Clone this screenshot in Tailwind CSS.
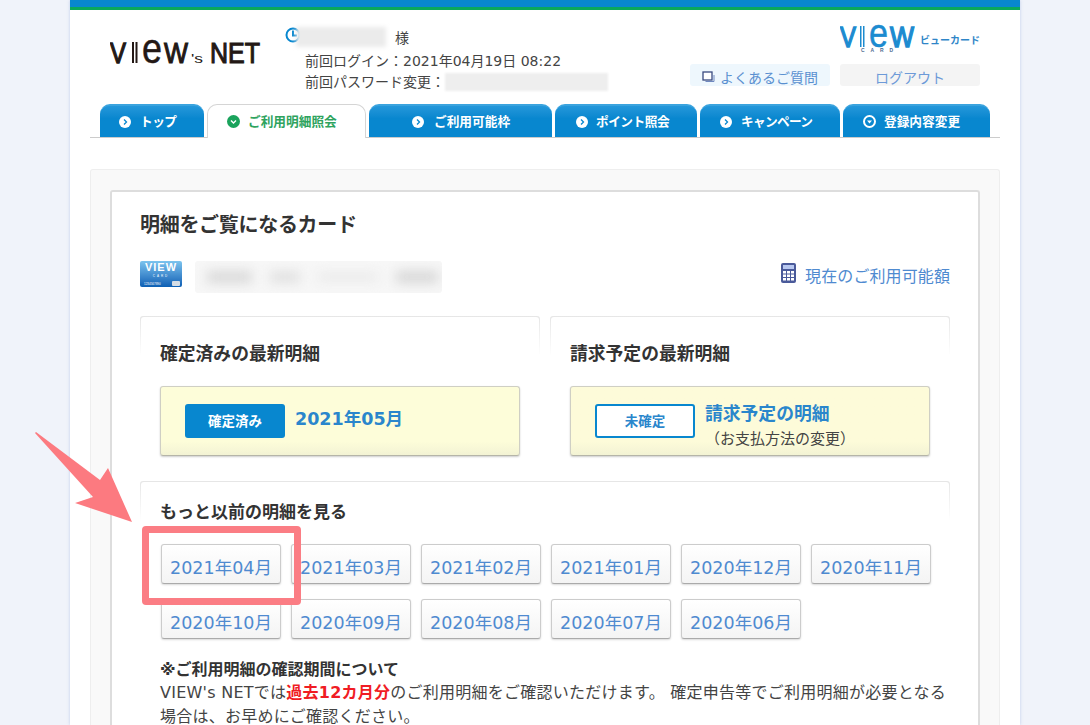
<!DOCTYPE html>
<html lang="ja">
<head>
<meta charset="utf-8">
<script src="https://cdn.jsdelivr.net/npm/@tailwindcss/browser@4"></script>
</head>
<body class="bg-[#f0f3fa]">
<div class="relative h-[725px] overflow-hidden font-['DejaVu_Sans','Noto_Sans_CJK_JP',sans-serif] text-[#333]">
  <div class="w-[950px] h-[725px] ml-[70px] bg-white shadow-[0_0_3px_rgba(170,190,230,0.7)]">
    <div class="h-[7px] bg-[#0887cf]"></div>
    <div class="h-[3px] bg-[#0aa85c]"></div>

    <!-- header -->
    <div class="h-[94px] flex">
      <div class="w-[215px] pl-[40px] pt-[15px]">
        <svg width="170" height="50" viewBox="0 0 170 50" class="block" font-family="Liberation Sans" fill="#231815">
          <text x="0" y="38" font-size="29" textLength="16" lengthAdjust="spacingAndGlyphs" stroke="#231815" stroke-width="1.300">V</text>
          <rect x="22" y="17" width="2" height="21" />
          <rect x="25.500" y="17" width="2" height="21" />
          <text x="32" y="38" font-size="42" textLength="20" lengthAdjust="spacingAndGlyphs" stroke="#231815" stroke-width="0.500">e</text>
          <text x="54" y="38" font-size="29" textLength="24" lengthAdjust="spacingAndGlyphs" stroke="#231815" stroke-width="1.100">W</text>
          <text x="81" y="38" font-size="13" textLength="12" lengthAdjust="spacingAndGlyphs">'s</text>
          <text x="100" y="38" font-size="29" textLength="50" lengthAdjust="spacingAndGlyphs" stroke="#231815" stroke-width="1.100">NET</text>
        </svg>
      </div>
      <div class="w-[405px] text-[14px] leading-[21px] text-[#444]">
        <div class="flex h-[40px] pt-[17px]">
          <svg width="16" height="16" viewBox="0 0 16 16" class="shrink-0"><circle cx="8" cy="8" r="6.500" fill="#fff" stroke="#0887cf" stroke-width="2"/><path d="M8 3.500V8.500H12" fill="none" stroke="#0887cf" stroke-width="2"/></svg>
          <div class="w-[90px] h-[20px] -ml-[5px] bg-[#ebebeb] blur-[2px]"></div>
          <span class="ml-[9px] leading-[22px]">様</span>
        </div>
        <div class="pl-[20px] pt-[1px]">前回ログイン：2021年04月19日 08:22</div>
        <div class="pl-[20px] flex">前回パスワード変更：<div class="w-[163px] h-[18px] mt-[1px] bg-[#eeeeee] blur-[1px]"></div></div>
      </div>
      <div class="w-[290px]">
        <div class="h-[54px] flex justify-end pt-[5px] gap-[5px]">
          <svg width="75" height="44" viewBox="0 0 75 44" font-family="Liberation Sans" fill="#1c8bd0">
            <text x="0" y="32" font-size="30" textLength="16" lengthAdjust="spacingAndGlyphs" stroke="#1c8bd0" stroke-width="1.500">V</text>
            <rect x="20" y="11" width="1.500" height="21"/><rect x="23" y="11" width="1.500" height="21"/>
            <text x="29" y="32" font-size="40" textLength="19" lengthAdjust="spacingAndGlyphs" stroke="#1c8bd0" stroke-width="0.500">e</text>
            <text x="50" y="32" font-size="30" textLength="24" lengthAdjust="spacingAndGlyphs" stroke="#1c8bd0" stroke-width="1.500">W</text>
            <text x="21" y="37" font-size="5" font-weight="700" textLength="32" fill="#4a6a90">CARD</text>
          </svg>
          <span class="w-[60px] text-[10px] font-bold leading-[52px] text-[#2f86c8] whitespace-nowrap">ビューカード</span>
        </div>
        <div class="flex gap-[10px]">
          <div class="w-[140px] h-[22px] bg-[#eef7fd] rounded-[3px] flex justify-center gap-[5px] text-[14px] leading-[29px] text-[#5a90d0] overflow-hidden">
            <svg width="13" height="13" viewBox="0 0 13 13" class="mt-[7px]"><path d="M3.500 10.500H12V4" fill="none" stroke="#6f88c0" stroke-width="1"/><rect x="1" y="1" width="9" height="8" fill="#fff" stroke="#3a4a80" stroke-width="1.300"/></svg>
            <span>よくあるご質問</span>
          </div>
          <div class="w-[140px] h-[22px] bg-[#f4f4f4] rounded-[3px] text-center text-[14px] leading-[29px] text-[#6d9ad8] overflow-hidden">ログアウト</div>
        </div>
      </div>
    </div>

    <!-- tabs -->
    <div class="mx-[20px] pl-[10px] h-[34px] flex gap-[3px] border-b border-[#cccccc] text-[12.7px] font-bold leading-[33px] text-white">
      <div class="w-[104px] h-[33px] pl-[19px] rounded-t-[10px] border-t-2 border-[#3aa3de] bg-linear-to-b from-[#2397da] to-[#0887cf] to-40% flex items-center gap-[9px]">
        <svg width="12" height="12" viewBox="0 0 12 12"><circle cx="6" cy="6" r="6" fill="#fff"/><path d="M5 3.500L7.500 6L5 8.500" fill="none" stroke="#0887cf" stroke-width="1.300"/></svg><span class="tracking-[-0.5px]">トップ</span>
      </div>
      <div class="w-[159px] h-[34px] pl-[19px] rounded-t-[10px] border border-b-0 border-[#d5d5d5] bg-white text-[#2ea35e] flex items-center gap-[8px]">
        <svg width="13" height="13" viewBox="0 0 13 13"><circle cx="6.500" cy="6.500" r="6.500" fill="#1aa35c"/><path d="M4 5.500L6.500 8L9 5.500" fill="none" stroke="#fff" stroke-width="1.400"/></svg><span>ご利用明細照会</span>
      </div>
      <div class="w-[183px] h-[33px] pl-[43px] rounded-t-[10px] border-t-2 border-[#3aa3de] bg-linear-to-b from-[#2397da] to-[#0887cf] to-40% flex items-center gap-[10px]">
        <svg width="12" height="12" viewBox="0 0 12 12"><circle cx="6" cy="6" r="6" fill="#fff"/><path d="M5 3.500L7.500 6L5 8.500" fill="none" stroke="#0887cf" stroke-width="1.300"/></svg><span>ご利用可能枠</span>
      </div>
      <div class="w-[142px] h-[33px] pl-[21px] rounded-t-[10px] border-t-2 border-[#3aa3de] bg-linear-to-b from-[#2397da] to-[#0887cf] to-40% flex items-center gap-[8px]">
        <svg width="12" height="12" viewBox="0 0 12 12"><circle cx="6" cy="6" r="6" fill="#fff"/><path d="M5 3.500L7.500 6L5 8.500" fill="none" stroke="#0887cf" stroke-width="1.300"/></svg><span class="tracking-[-0.5px]">ポイント照会</span>
      </div>
      <div class="w-[140px] h-[33px] pl-[20px] rounded-t-[10px] border-t-2 border-[#3aa3de] bg-linear-to-b from-[#2397da] to-[#0887cf] to-40% flex items-center gap-[9px]">
        <svg width="12" height="12" viewBox="0 0 12 12"><circle cx="6" cy="6" r="6" fill="#fff"/><path d="M5 3.500L7.500 6L5 8.500" fill="none" stroke="#0887cf" stroke-width="1.300"/></svg><span class="tracking-[-0.7px]">キャンペーン</span>
      </div>
      <div class="w-[147px] h-[33px] pl-[20px] rounded-t-[10px] border-t-2 border-[#3aa3de] bg-linear-to-b from-[#2397da] to-[#0887cf] to-40% flex items-center gap-[8px]">
        <svg width="13" height="13" viewBox="0 0 13 13"><circle cx="6.500" cy="6.500" r="5.500" fill="#0887cf" stroke="#fff" stroke-width="2"/><path d="M4 5.500H9L6.500 8.500Z" fill="#fff"/></svg><span>登録内容変更</span>
      </div>
    </div>

    <!-- outer panel -->
    <div class="mx-[20px] mt-[31px] px-[19px] pt-[20px] bg-[#f9f9f9] border border-b-0 border-[#eeeeee] rounded-t-[3px] h-[600px]">
      <div class="h-[600px] bg-white border-2 border-b-0 border-[#dddddd] rounded-t-[3px] px-[28px] pt-[18px]">
        <h2 class="text-[20px] font-bold leading-[30px] tracking-[-0.3px]">明細をご覧になるカード</h2>

        <div class="mt-[21px] h-[32px] flex">
          <div class="relative w-[42px] h-[26px] rounded-[2px] bg-linear-to-b from-[#7cc4ee] to-[#0a5fb4] text-white text-center overflow-hidden font-['Liberation_Sans']">
            <div class="text-[11px] font-bold leading-[13px] tracking-[1px]">VIEW</div>
            <div class="text-[3px] leading-[4px] tracking-[2px]">CARD</div>
            <div class="absolute bottom-[1px] left-[4px] text-[3px] leading-[4px]">1234567890</div>
            <div class="absolute bottom-[1px] right-[2px] w-[8px] h-[5px] bg-[#d5dde5] rounded-[1px]"></div>
          </div>
          <div class="ml-[13px] w-[247px] h-[32px] bg-[#f7f7f7] rounded-[3px] flex items-center pl-[12px] gap-[18px] overflow-hidden">
            <div class="w-[45px] h-[12px] bg-[#d8d8d8] blur-[6px]"></div>
            <div class="w-[30px] h-[10px] bg-[#dddddd] blur-[6px]"></div>
            <div class="w-[60px] h-[8px] bg-[#e8e8e8] blur-[6px]"></div>
            <div class="w-[42px] h-[12px] bg-[#d6d6d6] blur-[6px]"></div>
          </div>
          <div class="ml-auto flex items-start gap-[9px] pt-[2px] text-[16px] leading-[28px] tracking-[0.1px] text-[#4f8ad0]">
            <svg width="15" height="20" viewBox="0 0 15 20"><rect width="15" height="20" rx="2" fill="#4a5a9a"/><rect x="2" y="2" width="11" height="4" fill="#b8c8f0"/><g fill="#fff"><rect x="2" y="8" width="3" height="2.500"/><rect x="6" y="8" width="3" height="2.500"/><rect x="10" y="8" width="3" height="2.500"/><rect x="2" y="11.500" width="3" height="2.500"/><rect x="6" y="11.500" width="3" height="2.500"/><rect x="10" y="11.500" width="3" height="2.500"/><rect x="2" y="15" width="3" height="2.500"/><rect x="6" y="15" width="3" height="2.500"/><rect x="10" y="15" width="3" height="2.500"/></g></svg>
            <span>現在のご利用可能額</span>
          </div>
        </div>

        <div class="mt-[23px] flex gap-[10px]">
          <div class="w-[400px] p-px pb-0 rounded-t-[3px] bg-linear-to-b from-[#e6e6e6] to-white to-[40px]">
            <div class="bg-white rounded-t-[3px] px-[19px] pt-[24px]">
              <h3 class="text-[17.8px] font-bold leading-[26px]">確定済みの最新明細</h3>
              <div class="mt-[19px] h-[70px] border border-[#cfcfc4] border-b-[#b5b5a8] rounded-[3px] bg-linear-to-b from-[#fdfdd9] from-80% to-[#f3f3d4] shadow-[0_1px_2px_rgba(0,0,0,0.2)] flex items-center pl-[24px]">
                <div class="w-[100px] h-[34px] rounded-[3px] bg-[#0887cf] text-white text-center text-[13.5px] font-bold leading-[34px]">確定済み</div>
                <div class="ml-[10px] text-[#2a86cc] text-[17.5px] font-bold -mt-[3px]">2021年05月</div>
              </div>
            </div>
          </div>
          <div class="w-[400px] p-px pb-0 rounded-t-[3px] bg-linear-to-b from-[#e6e6e6] to-white to-[40px]">
            <div class="bg-white rounded-t-[3px] px-[19px] pt-[24px]">
              <h3 class="text-[17.8px] font-bold leading-[26px]">請求予定の最新明細</h3>
              <div class="mt-[19px] h-[70px] border border-[#cfcfc4] border-b-[#b5b5a8] rounded-[3px] bg-linear-to-b from-[#fdfbd9] from-80% to-[#f3f3d4] shadow-[0_1px_2px_rgba(0,0,0,0.2)] flex items-center pl-[24px]">
                <div class="w-[100px] h-[34px] rounded-[3px] bg-white border-2 border-[#0887cf] text-[#2a86cc] text-center text-[13.5px] font-bold leading-[30px]">未確定</div>
                <div class="ml-[10px] mt-[10px]">
                  <div class="text-[#2a86cc] text-[17.8px] font-bold leading-[26px]">請求予定の明細</div>
                  <div class="text-[15px] leading-[25px] text-[#444]">（お支払方法の変更）</div>
                </div>
              </div>
            </div>
          </div>
        </div>

        <div class="mt-[25px] h-[300px] w-[810px] p-px rounded-t-[3px] bg-linear-to-b from-[#e6e6e6] to-white to-[40px]">
          <div class="h-full bg-white rounded-t-[3px] px-[19px] pt-[17px]">
            <h3 class="text-[17px] font-bold leading-[26px]">もっと以前の明細を見る</h3>
            <div class="mt-[19px] ml-px grid grid-cols-[repeat(6,120px)] gap-x-[10px] gap-y-[15px] text-[17.5px] text-[#4f8ad0]">
              <div class="h-[40px] text-center leading-[46px] border border-[#cccccc] border-b-[#aaaaaa] rounded-[3px] bg-linear-to-b from-white to-[#f4f4f4] shadow-[0_1px_2px_rgba(0,0,0,0.15)]">2021年04月</div>
              <div class="h-[40px] text-center leading-[46px] border border-[#cccccc] border-b-[#aaaaaa] rounded-[3px] bg-linear-to-b from-white to-[#f4f4f4] shadow-[0_1px_2px_rgba(0,0,0,0.15)]">2021年03月</div>
              <div class="h-[40px] text-center leading-[46px] border border-[#cccccc] border-b-[#aaaaaa] rounded-[3px] bg-linear-to-b from-white to-[#f4f4f4] shadow-[0_1px_2px_rgba(0,0,0,0.15)]">2021年02月</div>
              <div class="h-[40px] text-center leading-[46px] border border-[#cccccc] border-b-[#aaaaaa] rounded-[3px] bg-linear-to-b from-white to-[#f4f4f4] shadow-[0_1px_2px_rgba(0,0,0,0.15)]">2021年01月</div>
              <div class="h-[40px] text-center leading-[46px] border border-[#cccccc] border-b-[#aaaaaa] rounded-[3px] bg-linear-to-b from-white to-[#f4f4f4] shadow-[0_1px_2px_rgba(0,0,0,0.15)]">2020年12月</div>
              <div class="h-[40px] text-center leading-[46px] border border-[#cccccc] border-b-[#aaaaaa] rounded-[3px] bg-linear-to-b from-white to-[#f4f4f4] shadow-[0_1px_2px_rgba(0,0,0,0.15)]">2020年11月</div>
              <div class="h-[40px] text-center leading-[46px] border border-[#cccccc] border-b-[#aaaaaa] rounded-[3px] bg-linear-to-b from-white to-[#f4f4f4] shadow-[0_1px_2px_rgba(0,0,0,0.15)]">2020年10月</div>
              <div class="h-[40px] text-center leading-[46px] border border-[#cccccc] border-b-[#aaaaaa] rounded-[3px] bg-linear-to-b from-white to-[#f4f4f4] shadow-[0_1px_2px_rgba(0,0,0,0.15)]">2020年09月</div>
              <div class="h-[40px] text-center leading-[46px] border border-[#cccccc] border-b-[#aaaaaa] rounded-[3px] bg-linear-to-b from-white to-[#f4f4f4] shadow-[0_1px_2px_rgba(0,0,0,0.15)]">2020年08月</div>
              <div class="h-[40px] text-center leading-[46px] border border-[#cccccc] border-b-[#aaaaaa] rounded-[3px] bg-linear-to-b from-white to-[#f4f4f4] shadow-[0_1px_2px_rgba(0,0,0,0.15)]">2020年07月</div>
              <div class="h-[40px] text-center leading-[46px] border border-[#cccccc] border-b-[#aaaaaa] rounded-[3px] bg-linear-to-b from-white to-[#f4f4f4] shadow-[0_1px_2px_rgba(0,0,0,0.15)]">2020年06月</div>
            </div>
            <div class="mt-[19px] text-[16px] leading-[24px] tracking-[0.25px] text-[#444]">
              <div class="font-bold text-[#333] tracking-normal leading-[23px]">※ご利用明細の確認期間について</div>
              <div class="whitespace-nowrap">VIEW's NETでは<strong class="text-[#f01c24]">過去12カ月分</strong>のご利用明細をご確認いただけます。 確定申告等でご利用明細が必要となる</div>
              <div>場合は、お早めにご確認ください。</div>
            </div>
          </div>
        </div>
      </div>
    </div>
  </div>

  <!-- annotation overlays -->
  <div class="absolute left-[142px] top-[526px] w-[159px] h-[79px] border-[7px] border-[#fb7d84] rounded-[4px]"></div>
  <svg class="absolute left-0 top-0" width="200" height="560" viewBox="0 0 200 560"><polygon points="35,433 36,432 100,480 108,468 132,522 75,503 93,497" fill="#fc7a80"/></svg>
</div>
</body>
</html>
